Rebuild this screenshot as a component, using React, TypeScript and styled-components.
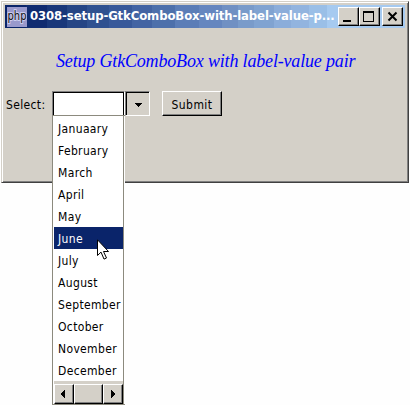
import React from 'react';
import styled, { createGlobalStyle } from 'styled-components';

const Global = createGlobalStyle`
  * { box-sizing: border-box; }
  body { margin: 0; background: #fefefe; overflow: hidden; }
`;

const Desktop = styled.main`
  height: 405px;
  padding: 1px;
  position: relative;
  font: 12px 'DejaVu Sans Condensed', 'DejaVu Sans', sans-serif;
  font-stretch: condensed;
  letter-spacing: 0.35px;
  color: #000;
  white-space: nowrap;
`;

const Window = styled.section`
  width: 408px;
  height: 182px;
  background: #d4d0c8;
  border: 1px solid;
  border-color: #d4d0c8 #404040 #404040 #d4d0c8;
  box-shadow: inset 1px 1px #fff, inset -1px -1px #808080;
  padding: 3px;
`;

const TitleBar = styled.header`
  height: 23px;
  display: flex;
  align-items: center;
  padding: 0 2px;
  background: linear-gradient(90deg, #0a246a 0 21px, #102b70 21px 42px, #19377a 42px 62px, #254585 62px 82px, #2f5190 82px 104px, #38599a 104px 127px, #4364a3 127px 147px, #4d70ab 147px 170px, #5b7db7 170px 194px, #6586bf 194px 217px, #7090c3 217px 233px, #799bca 233px 249px, #80a3d1 249px 269px, #8badda 269px 286px, #92b4df 286px 304px, #9abfe7 304px 322px, #a6caf0 322px);
`;

const PhpIcon = styled.svg`
  width: 20px;
  height: 20px;
  flex: none;
`;

const Title = styled.h1`
  margin: 0 0 1px 3px;
  width: 308px;
  font-size: 13px;
  line-height: 18px;
  letter-spacing: -0.12px;
  color: #fff;
`;

const Controls = styled.div`
  display: flex;
  & > :last-child { margin-left: 2px; }
`;

const bevel = `
  background: #d4d0c8;
  border: 1px solid;
  border-color: #fff #000 #000 #fff;
  box-shadow: inset -1px -1px #808080;
  padding: 0;
`;

const ControlButton = styled.button`
  ${bevel}
  width: 21px;
  height: 19px;
  svg { display: block; }
`;

const Heading = styled.h2`
  margin: 21px 0 0 51px;
  font: italic 18px/24px 'Liberation Serif', serif;
  letter-spacing: -0.17px;
  color: #0000ff;
`;

const FormRow = styled.div`
  display: flex;
  align-items: center;
  height: 25px;
  margin: 18px 0 0 1px;
`;

const Label = styled.label`
  width: 46px;
  padding-top: 2px;
`;

const Entry = styled.input`
  width: 73px;
  height: 25px;
  border: 1px solid;
  border-color: #808080 #fff #fff #808080;
  box-shadow: inset 1px 1px #000, inset -1px 0 #000;
  background: #fff;
  padding: 0 4px;
`;

const ArrowButton = styled.button`
  width: 25px;
  height: 25px;
  padding: 0;
  background: #d4d0c8;
  border: 1px solid;
  border-color: #808080 #fff #fff #808080;
  box-shadow: inset 1px 1px #000;
  svg { display: block; }
`;

const Submit = styled.button`
  ${bevel}
  width: 60px;
  height: 25px;
  margin-left: 12px;
  padding-top: 2px;
  font: inherit;
  letter-spacing: 0.45px;
`;

const Popup = styled.div`
  position: absolute;
  left: 52px;
  top: 115px;
  width: 73px;
  height: 290px;
  background: #fff;
  border: 1px solid #8c8a7e;
  border-right: 0;
  box-shadow: inset -1px 0 #fff, inset -2px 0 #8c8a7e;
  padding: 1px 2px 0 1px;
`;

const Months = styled.ul`
  list-style: none;
  margin: 0;
  padding: 0;
`;

const Month = styled.li<{ $active: boolean }>`
  height: 22px;
  line-height: 22px;
  padding: 1px 0 0 4px;
  background: ${(p) => (p.$active ? '#0a246a' : 'transparent')};
  color: ${(p) => (p.$active ? '#fff' : '#000')};
`;

const ScrollBar = styled.div`
  height: 23px;
  padding-top: 3px;
  display: grid;
  grid-template-columns: 20px 1fr 20px;
  background: #d4d0c8;
`;

const ScrollPart = styled.button`
  ${bevel}
  height: 20px;
  svg { display: block; }
`;

const Pointer = styled.svg`
  position: absolute;
  left: 97px;
  top: 239px;
`;

const months = ['Januaary', 'February', 'March', 'April', 'May', 'June', 'July', 'August', 'September', 'October', 'November', 'December'];

export default function App() {
  return (
    <Desktop>
      <Global />
      <Window>
        <TitleBar>
          <PhpIcon viewBox="0 0 20 20">
            <rect width="20" height="20" fill="#9999cc" />
            <text x="0.5" y="13" fontFamily="DejaVu Sans" fontSize="12" letterSpacing="0" textLength="19" lengthAdjust="spacingAndGlyphs" stroke="#ccccee" strokeWidth="2" paintOrder="stroke" fill="#111">php</text>
          </PhpIcon>
          <Title>0308-setup-GtkComboBox-with-label-value-p...</Title>
          <Controls>
            <ControlButton aria-label="Minimize"><svg width="19" height="17"><path d="M4 12h8v2H4z" /></svg></ControlButton>
            <ControlButton aria-label="Maximize"><svg width="19" height="17"><path fillRule="evenodd" d="M3 3h11v11H3zM4 5v8h9V5z" /></svg></ControlButton>
            <ControlButton aria-label="Close"><svg width="19" height="17"><path d="M5.5 4.5l8 8M13.5 4.5l-8 8" stroke="#000" strokeWidth="2" /></svg></ControlButton>
          </Controls>
        </TitleBar>
        <Heading>Setup GtkComboBox with label-value pair</Heading>
        <FormRow>
          <Label htmlFor="month">Select:</Label>
          <Entry id="month" />
          <ArrowButton aria-label="Open list"><svg width="23" height="23"><path d="M9 11h7v1h-1v1h-1v1h-1v1h-1v-1h-1v-1h-1v-1h-1z" /></svg></ArrowButton>
          <Submit>Submit</Submit>
        </FormRow>
      </Window>
      <Popup>
        <Months>
          {months.map((m) => <Month key={m} $active={m === 'June'}>{m}</Month>)}
        </Months>
        <ScrollBar>
          <ScrollPart aria-label="Left"><svg width="18" height="18"><path d="M10 5v8h-1v-1h-1v-1h-1v-1h-1v-2h1v-1h1v-1h1v-1z" /></svg></ScrollPart>
          <ScrollPart aria-label="Thumb" />
          <ScrollPart aria-label="Right"><svg width="18" height="18"><path d="M7 5v8h1v-1h1v-1h1v-1h1v-2h-1v-1h-1v-1h-1v-1z" /></svg></ScrollPart>
        </ScrollBar>
      </Popup>
      <Pointer width="13" height="22" viewBox="0 0 13 22">
        <path d="M.5.8v15.7l3.5-3.4 3 7 2.5-1.1-3-6.5h5z" fill="#fff" stroke="#000" />
      </Pointer>
    </Desktop>
  );
}
